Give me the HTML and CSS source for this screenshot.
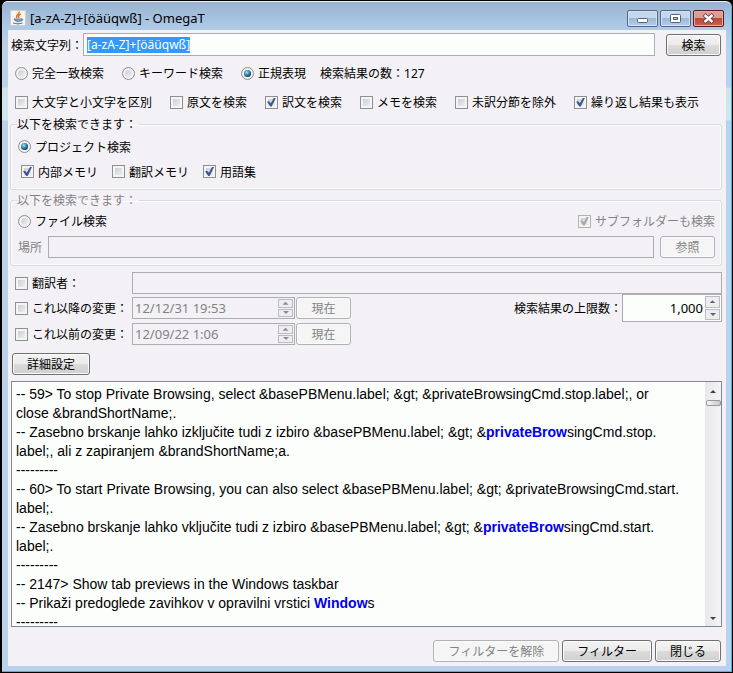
FILE: index.html
```html
<!DOCTYPE html>
<html lang="ja">
<head>
<meta charset="utf-8">
<title>[a-zA-Z]+[öäüqwß] - OmegaT</title>
<link rel="stylesheet" href="styles.css">
</head>
<body>
<div class="window">
  <header class="titlebar">
    <svg class="app-icon" viewBox="0 0 16 16" aria-hidden="true">
      <rect x=".5" y=".5" width="15" height="15" fill="#f5f5f1" stroke="#cfcfc9"/>
      <path d="M9 1.500C10.500 4 5 4.500 7 8M10.800 4C8 5.500 8.500 6 8.800 8" fill="none" stroke="#e8772a" stroke-width="1.600"/>
      <path d="M4 9h7.500v1.500q-3.500 2.500-6.500 0zM3 13q5 2 9.500 0" fill="#8fa5b8" stroke="#5f7f9c"/>
      <path d="M11.500 8.800q2.500.2 0 2.600" fill="none" stroke="#5f7f9c"/>
    </svg>
    <h1 class="title">[a-zA-Z]+[öäüqwß] - OmegaT</h1>
    <div class="window-buttons">
      <button class="window-button" type="button" aria-label="最小化">
        <svg viewBox="0 0 29 15"><rect x="9.500" y="7.500" width="10" height="4" rx="1" fill="#fff" stroke="#59606e"/></svg>
      </button>
      <button class="window-button" type="button" aria-label="最大化">
        <svg viewBox="0 0 29 15"><rect x="9.500" y="3.500" width="10" height="8" rx="1" fill="#fff" stroke="#59606e"/><rect x="12.500" y="6.500" width="4" height="2" fill="#a9c3e2" stroke="#59606e"/></svg>
      </button>
      <button class="window-button close" type="button" aria-label="閉じる">
        <svg viewBox="0 0 29 15"><path d="M10 3.500l9 8M19 3.500l-9 8" stroke="#5d3a45" stroke-width="4"/><path d="M10.500 4l8 7M18.500 4l-8 7" stroke="#fff" stroke-width="2.400"/></svg>
      </button>
    </div>
  </header>

  <main class="content">
    <form class="form">
      <div class="search-row">
        <label for="query">検索文字列：</label>
        <div class="field query"><input id="query" type="text" value="[a-zA-Z]+[öäüqwß]" autofocus></div>
        <button class="button" type="button">検索</button>
      </div>

      <div class="options">
        <label class="option"><input type="radio" name="mode">完全一致検索</label>
        <label class="option"><input type="radio" name="mode">キーワード検索</label>
        <label class="option"><input type="radio" name="mode" checked>正規表現</label>
        <span class="count">検索結果の数：<span class="latin">127</span></span>
      </div>
      <div class="options">
        <label class="option"><input type="checkbox">大文字と小文字を区別</label>
        <label class="option"><input type="checkbox">原文を検索</label>
        <label class="option"><input type="checkbox" checked>訳文を検索</label>
        <label class="option"><input type="checkbox">メモを検索</label>
        <label class="option"><input type="checkbox">未訳分節を除外</label>
        <label class="option"><input type="checkbox" checked>繰り返し結果も表示</label>
      </div>

      <fieldset class="group">
        <legend>以下を検索できます：</legend>
        <label class="option"><input type="radio" name="scope" checked>プロジェクト検索</label>
        <div class="memories">
          <label class="option"><input type="checkbox" checked>内部メモリ</label>
          <label class="option"><input type="checkbox">翻訳メモリ</label>
          <label class="option"><input type="checkbox" checked>用語集</label>
        </div>
      </fieldset>

      <fieldset class="group files">
        <legend class="muted">以下を検索できます：</legend>
        <div class="split">
          <label class="option"><input type="radio" name="scope">ファイル検索</label>
          <label class="option muted"><input type="checkbox" checked disabled>サブフォルダーも検索</label>
        </div>
        <div class="location">
          <label class="muted" for="location">場所</label>
          <input class="field" id="location" type="text" disabled>
          <button class="button" type="button" disabled>参照</button>
        </div>
      </fieldset>

      <div class="author">
        <label class="option filter-name"><input type="checkbox">翻訳者：</label>
        <input class="field" type="text" aria-label="翻訳者" disabled>
      </div>
      <div class="filters">
        <div class="dates">
          <div class="date-row">
            <label class="option filter-name"><input type="checkbox">これ以降の変更：</label>
            <div class="spinner disabled">
              <input type="text" aria-label="これ以降の日時" value="12/12/31 19:53" disabled>
              <div class="steps"><button type="button" aria-label="増やす" disabled></button><button class="down" type="button" aria-label="減らす" disabled></button></div>
            </div>
            <button class="button" type="button" disabled>現在</button>
          </div>
          <div class="date-row">
            <label class="option filter-name"><input type="checkbox">これ以前の変更：</label>
            <div class="spinner disabled">
              <input type="text" aria-label="これ以前の日時" value="12/09/22 1:06" disabled>
              <div class="steps"><button type="button" aria-label="増やす" disabled></button><button class="down" type="button" aria-label="減らす" disabled></button></div>
            </div>
            <button class="button" type="button" disabled>現在</button>
          </div>
        </div>
        <div class="limit">
          <label for="limit">検索結果の上限数：</label>
          <div class="spinner number">
            <input id="limit" type="text" value="1,000">
            <div class="steps"><button type="button" aria-label="増やす"></button><button class="down" type="button" aria-label="減らす"></button></div>
          </div>
        </div>
      </div>
      <button class="button advanced" type="button">詳細設定</button>
    </form>

    <section class="results">
      <div class="result-text">
        <p>-- 59&gt; To stop Private Browsing, select &amp;basePBMenu.label; &amp;gt; &amp;privateBrowsingCmd.stop.label;, or<br>close &amp;brandShortName;.</p>
        <p>-- Zasebno brskanje lahko izključite tudi z izbiro &amp;basePBMenu.label; &amp;gt; &amp;<b>privateBrow</b>singCmd.stop.<br>label;, ali z zapiranjem &amp;brandShortName;a.</p>
        <p>---------</p>
        <p>-- 60&gt; To start Private Browsing, you can also select &amp;basePBMenu.label; &amp;gt; &amp;privateBrowsingCmd.start.<br>label;.</p>
        <p>-- Zasebno brskanje lahko vključite tudi z izbiro &amp;basePBMenu.label; &amp;gt; &amp;<b>privateBrow</b>singCmd.start.<br>label;.</p>
        <p>---------</p>
        <p>-- 2147&gt; Show tab previews in the Windows taskbar</p>
        <p>-- Prikaži predoglede zavihkov v opravilni vrstici <b>Window</b>s</p>
        <p>---------</p>
      </div>
      <div class="scrollbar">
        <span class="arrow"></span>
        <span class="thumb"></span>
        <span class="arrow down"></span>
      </div>
    </section>

    <footer class="actions">
      <button class="button" type="button" disabled>フィルターを解除</button>
      <button class="button" type="button">フィルター</button>
      <button class="button" type="button">閉じる</button>
    </footer>
  </main>
</div>
<script src="script.js"></script>
</body>
</html>
```
FILE: script.js
```js
const query = document.getElementById("query");
query.focus();
query.select();
```
FILE: styles.css
```css
* { box-sizing: border-box; }

body {
  margin: 0;
  background: #000;
  color: #000;
  font: 12px/16px "Noto Sans CJK JP", sans-serif;
}

button, input {
  margin: 0;
  color: inherit;
  font: inherit;
}

p { margin: 0; }

.window {
  display: flex;
  flex-direction: column;
  height: 100vh;
  padding: 0 6px 6px;
  border: solid #000;
  border-width: 1px 1px 1px 2px;
  border-radius: 7px 7px 0 0;
  background: linear-gradient(#9bb3cf, #a0bcd9 10px, #b0cbe6 28px, #bcd2ec 50px, #bcd2ec 86px, #d3e2e8 87px, #cfe6ee 119px, #bcd2ec 120px);
  box-shadow: inset 0 1px #e8f0f8, inset -1px -1px #35bfe8;
}

.titlebar {
  display: flex;
  flex: none;
  align-items: center;
  height: 29px;
  padding: 5px 2px 0 2px;
}

.app-icon { width: 16px; height: 16px; }

.title {
  flex: 1;
  margin: 0 0 0 4px;
  font: 13px/16px "Noto Sans", sans-serif;
}

.window-buttons { display: flex; gap: 2px; }

.window-button {
  display: block;
  width: 31px;
  height: 17px;
  padding: 0;
  border: 1px solid #51688b;
  border-radius: 2px;
  background: linear-gradient(#c4d7ec 50%, #9db8d8 50%, #b5cfe8);
  box-shadow: inset 0 0 0 1px #d2e2f3;
}

.window-button svg { display: block; width: 100%; height: 100%; }

.close {
  border-color: #561c25;
  background: linear-gradient(#dd9d91 45%, #bd4936 50%, #c9614b);
  box-shadow: inset 0 0 0 1px #e2aca4;
}

.content {
  display: flex;
  flex: 1;
  flex-direction: column;
  min-height: 0;
  padding: 3px 4px 4px 2px;
  background: #f3f1f5;
}

.search-row {
  display: flex;
  align-items: center;
  padding: 0 1px;
}

.field {
  flex: 1;
  min-width: 0;
  height: 22px;
  padding: 0 3px;
  border: 1px solid #abadb3;
  background: #fcfefc;
}

.field:disabled { background: #f3f1f5; }

.query {
  display: flex;
  align-items: center;
  height: 23px;
  margin-right: 11px;
}

.query input {
  width: 100%;
  height: 16px;
  padding: 0;
  border: 0;
  outline: 0;
  background: none;
  font: 12px/16px "Noto Sans", sans-serif;
}

.query input::selection { background: #3399ff; color: #fff; }

.button {
  min-width: 55px;
  height: 22px;
  padding: 0 14px;
  border: 1px solid #707070;
  border-radius: 3px;
  background: linear-gradient(#f3f3f3, #ebebeb 50%, #dcdcdc 50%, #cfcfcf);
  box-shadow: inset 0 0 0 1px #fbfbfb;
  line-height: 16px;
  white-space: nowrap;
}

.button:disabled {
  border-color: #adb2b5;
  background: #f4f5f4;
  color: #838383;
}

.options {
  display: flex;
  gap: 18px;
  height: 16px;
  padding-left: 5px;
  margin-top: 9px;
}

.options + .options { margin: 13px 0 6px; }

.option {
  display: inline-flex;
  align-items: center;
  gap: 4px;
  white-space: nowrap;
}

.count { margin-left: -4px; white-space: nowrap; }

.latin { font-family: "Noto Sans", sans-serif; }

.muted { color: #838383; }

input[type="radio"], input[type="checkbox"] {
  appearance: none;
  display: grid;
  flex: none;
  place-items: center;
  width: 13px;
  height: 13px;
  border: 1px solid #8e8f8f;
  background: linear-gradient(135deg, #c3c7cd, #f6f6f6);
  box-shadow: inset 0 0 0 2px #f4f4f4;
}

input[type="radio"] { border-radius: 50%; }

input[type="radio"]:checked::before {
  content: "";
  width: 7px;
  height: 7px;
  border-radius: 50%;
  background: radial-gradient(circle at 40% 35%, #a5e5f5, #2680a8 45%, #123652 75%);
}

input[type="checkbox"]:checked::before {
  content: "";
  width: 9px;
  height: 9px;
  background: #3c5698;
  clip-path: polygon(0 48%, 22% 42%, 42% 65%, 78% 0, 100% 0, 52% 100%, 36% 100%);
}

input[type="checkbox"]:disabled { border-color: #b1b1b1; }
input[type="checkbox"]:disabled::before { background: #a8a8ac; }

.group {
  min-width: 0;
  height: 74px;
  margin: 0;
  padding: 5px 6px 0 7px;
  border: 1px solid #d3dde0;
  border-radius: 3px;
  box-shadow: inset 0 0 0 1px #fdfdfd;
}

.group legend { padding: 0 2px 0 0; margin-left: -1px; }

.memories {
  display: flex;
  gap: 14px;
  margin: 9px 0 0 3px;
}

.files { margin-top: 2px; }
.split { display: flex; justify-content: space-between; }

.location {
  display: flex;
  align-items: center;
  gap: 6px;
  margin-top: 7px;
}

.author {
  display: flex;
  align-items: center;
  margin-top: 6px;
}

.filter-name {
  flex: none;
  width: 122px;
  padding-left: 5px;
}

.filters { display: flex; justify-content: space-between; }

.dates { padding-top: 3px; }

.date-row { display: flex; align-items: center; margin-bottom: 4px; }

.spinner {
  display: flex;
  width: 163px;
  height: 22px;
  margin-right: 1px;
  border: 1px solid #abadb3;
  background: #fcfefc;
}

.spinner input {
  flex: 1;
  min-width: 0;
  padding: 0 2px;
  border: 0;
  background: none;
  font: 13px/16px "Noto Sans", sans-serif;
}

.disabled { background: #f3f1f5; color: #838383; }

.steps {
  display: grid;
  gap: 1px;
  width: 16px;
  padding: 1px 1px 1px 0;
}

.steps button {
  display: grid;
  place-items: center;
  min-height: 0;
  padding: 0;
  border: 1px solid #bcbcc0;
  background: #ededf0;
}

.steps button::before, .arrow {
  content: "";
  width: 6px;
  height: 3px;
  background: #55648c;
  clip-path: polygon(50% 0, 100% 100%, 0 100%);
}

.disabled .steps button::before { background: #8a8a90; }
.steps .down::before, .arrow.down { transform: rotate(180deg); }

.limit { display: flex; align-items: center; height: 28px; }

.number { width: 100px; height: 28px; margin: 0; }
.number input { text-align: right; }

.advanced { display: block; margin: 4px 0 6px 2px; }

.results {
  display: flex;
  flex: 1;
  min-height: 0;
  margin-left: 1px;
  border: 1px solid #828790;
  background: #fcfefc;
}

.result-text {
  flex: 1;
  min-width: 0;
  overflow: hidden;
  padding: 3px 4px 0;
  font: 14px/19px "Liberation Sans", sans-serif;
  white-space: nowrap;
}

.result-text b { color: #0000f0; }

.scrollbar {
  display: flex;
  flex-direction: column;
  align-items: center;
  width: 16px;
  padding: 8px 0 6px;
  background: linear-gradient(90deg, #e8e8eb, #f3f2f5);
}

.arrow { background: #404040; }
.arrow.down { margin-top: auto; }

.thumb {
  width: 15px;
  height: 6px;
  margin-top: 7px;
  border: 1px solid #979797;
  border-radius: 2px;
  background: linear-gradient(90deg, #f5f5f5, #c8c8cc);
}

.actions {
  display: flex;
  justify-content: flex-end;
  gap: 3px;
  padding-right: 1px;
  margin-top: 13px;
}
```
